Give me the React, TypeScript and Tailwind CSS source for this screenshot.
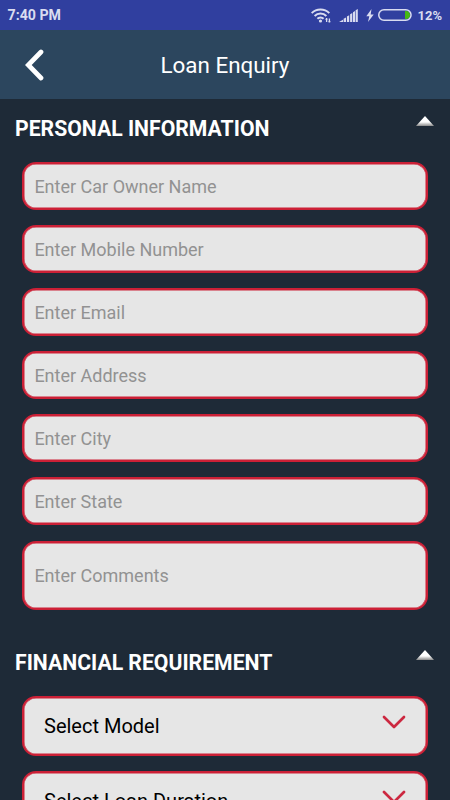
import React from 'react';

const personalFields = [
  'Enter Car Owner Name',
  'Enter Mobile Number',
  'Enter Email',
  'Enter Address',
  'Enter City',
  'Enter State',
];

const selects = ['Select Model', 'Select Loan Duration'];

const StatusBar: React.FC = () => (
  <div className="flex h-[30px] shrink-0 items-center bg-[#303f9f] pl-[7.5px] pr-2 text-[#d9dcf0]">
    <span className="pt-px text-[14.2px] font-bold leading-none">7:40 PM</span>
    <svg className="ml-auto" width="20" height="15" viewBox="0 0 20 15" fill="none" stroke="currentColor" strokeWidth="2">
      <path d="M.7 5.1a12.5 12.5 0 0 1 17.6 0" />
      <path d="M3.6 8a8.4 8.4 0 0 1 11.8 0" />
      <path d="M6.4 10.8a4.5 4.5 0 0 1 6.2 0" />
      <circle cx="9.5" cy="13" r="1.6" fill="currentColor" stroke="none" />
      <path d="M15.6 10v4M18.4 10.6v4M14.5 11.3h2M17.4 13.6h2" strokeWidth="1.3" />
    </svg>
    <svg className="ml-2" width="19" height="13" viewBox="0 0 19 13" fill="currentColor">
      <path d="M0 13l4-2.3V13zM4.6 9.8 7 8.6V13H4.6zM7.9 7.6l2.3-1.3V13H7.9zM11.1 5.3 13.3 4v9h-2.2zM14 3.2l2-1.2v11h-2zM16.6 1.3 18.8 0v13h-2.2z" />
    </svg>
    <svg className="ml-2" width="8" height="13" viewBox="0 0 8 13" fill="currentColor">
      <path d="M5.5 0 .3 7.2h3L2 13l5.7-7.6h-3z" />
    </svg>
    <svg className="ml-1" width="34" height="12" viewBox="0 0 34 12">
      <path d="M27 2h1a4 4 0 0 1 0 8h-1z" fill="#45b914" />
      <rect x=".75" y=".75" width="32.3" height="10.5" rx="5.25" fill="none" stroke="currentColor" strokeWidth="1.5" />
    </svg>
    <span className="ml-[5px] text-[13px] font-bold leading-none">12%</span>
  </div>
);

const SectionHeading: React.FC<{ title: string }> = ({ title }) => (
  <div className="flex h-[30px] items-center justify-between pl-[15px] pr-[16px]">
    <h2 className="whitespace-nowrap text-[21.2px] font-bold leading-[30px] text-white">{title}</h2>
    <svg className="mb-[16px]" width="18" height="10" viewBox="0 0 18 10">
      <defs>
        <linearGradient id="arrowFill" x1="0" y1="0" x2="0" y2="1">
          <stop offset=".6" stopColor="#fff" />
          <stop offset="1" stopColor="#888" />
        </linearGradient>
      </defs>
      <path d="M9 0 18 10H0z" fill="url(#arrowFill)" />
    </svg>
  </div>
);

const fieldBox = 'rounded-[14px] border-[2px] border-[#cc2036] bg-[#e6e6e6] shadow-[inset_0_0_0_0.5px_#cc2036]';
const inputText = 'w-full pl-[10.4px] pr-[11px] pt-px text-[18px] outline-none placeholder:text-[#929292]';

const App: React.FC = () => (
  <div className="flex h-[800px] w-[450px] flex-col overflow-hidden bg-[#1e2a37] font-['Roboto',sans-serif]">
    <StatusBar />

    <header className="grid h-[69px] shrink-0 grid-cols-[1fr_auto_1fr] items-center bg-[#2c465e]">
      <button className="ml-6 w-5" aria-label="Back">
        <svg width="20" height="32" viewBox="0 0 20 32" fill="none" stroke="#fff" strokeWidth="4.7" strokeLinecap="round" strokeLinejoin="miter">
          <path d="M17 3 4.3 16 17 29" />
        </svg>
      </button>
      <h1 className="pt-[2px] text-[22.4px] leading-none text-white">Loan Enquiry</h1>
    </header>

    <section className="shrink-0 pt-[15px]">
      <SectionHeading title="PERSONAL INFORMATION" />
      <div className="mt-[18px] flex flex-col gap-[15.1px] px-[22px]">
        {personalFields.map((label) => (
          <input key={label} placeholder={label} className={`${fieldBox} ${inputText} h-[48px]`} />
        ))}
        <input placeholder="Enter Comments" className={`${fieldBox} ${inputText} h-[69px]`} />
      </div>
    </section>

    <section className="shrink-0 pt-[38.4px]">
      <SectionHeading title="FINANCIAL REQUIREMENT" />
      <div className="mt-[18px] flex flex-col gap-[15px] px-[22px]">
        {selects.map((label) => (
          <button key={label} className={`${fieldBox} flex h-[60px] w-full items-center justify-between px-5 text-[20px] text-black`}>
            <span className="pt-px">{label}</span>
            <svg className="mb-2" width="24" height="14" viewBox="0 0 24 14" fill="none" stroke="#cc2840" strokeWidth="2.7" strokeLinecap="round" strokeLinejoin="round">
              <path d="M2 2l10 10L22 2" />
            </svg>
          </button>
        ))}
      </div>
    </section>
  </div>
);

export default App;
